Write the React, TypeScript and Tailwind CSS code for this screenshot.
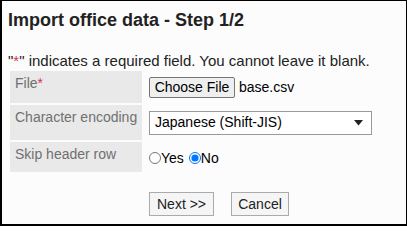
import React from "react";

const labelCell = "bg-[#e9e9e9] text-[#707070] pl-[5px] pt-[4px] whitespace-nowrap";

export default function App() {
  return (
    <div className="w-[407px] h-[226px] bg-[#fcfcfc] border-black border-t border-r border-l-2 border-b-2 font-['Liberation_Sans',Arial,sans-serif] text-[#222]">
      <h1 className="pl-[6px] pt-[8px] text-[18px] leading-[22px] font-bold text-[#222]">
        Import office data - Step 1/2
      </h1>
      <p className="pl-[6px] mt-[21px] text-[15px] leading-[18px] text-[#222]">
        "<span className="text-[#e0304a]">*</span>" indicates a required field. You cannot leave it blank.
      </p>
      <div className="ml-[8px] mt-[1px] grid grid-cols-[132px_1fr] gap-x-[6px] gap-y-[2px] text-[14px] leading-[17px]">
        <div className={`${labelCell} h-[32px]`}>
          File<span className="text-[#e0304a]">*</span>
        </div>
        <div className="flex items-start gap-[4px] pl-[1px] pt-[6px]">
          <button className="h-[21px] w-[86px] border border-[#767676] rounded-[2px] bg-[#efefef] text-[14px] text-black">
            Choose File
          </button>
          <span className="text-black mt-[2px]">base.csv</span>
        </div>

        <div className={`${labelCell} h-[35px]`}>Character encoding</div>
        <div className="flex items-center pl-[1px]">
          <div className="relative w-[223px] h-[24px] border border-[#999] bg-white flex items-center pl-[5px] text-black">
            Japanese (Shift-JIS)
            <svg className="absolute right-[8px] top-[8px]" width="9" height="6" viewBox="0 0 9 6">
              <path d="M0 0h9L4.5 5.5z" fill="#222" />
            </svg>
          </div>
        </div>

        <div className={`${labelCell} h-[30px]`}>Skip header row</div>
        <div className="flex items-center text-black pl-[1px] pt-[2px]">
          <label className="flex items-center">
            <input type="radio" name="skip" className="m-0 w-[12px] h-[12px]" />
            Yes
          </label>
          <label className="flex items-center ml-[5px]">
            <input type="radio" name="skip" defaultChecked className="m-0 w-[12px] h-[12px]" />
            No
          </label>
        </div>
      </div>
      <div className="flex gap-[17px] ml-[147px] mt-[20px] text-[14px]">
        <button className="h-[24px] w-[65px] border border-[#aaa] bg-[#f5f5f5] text-[#222]">Next &gt;&gt;</button>
        <button className="h-[24px] w-[58px] border border-[#aaa] bg-[#f5f5f5] text-[#222]">Cancel</button>
      </div>
    </div>
  );
}
